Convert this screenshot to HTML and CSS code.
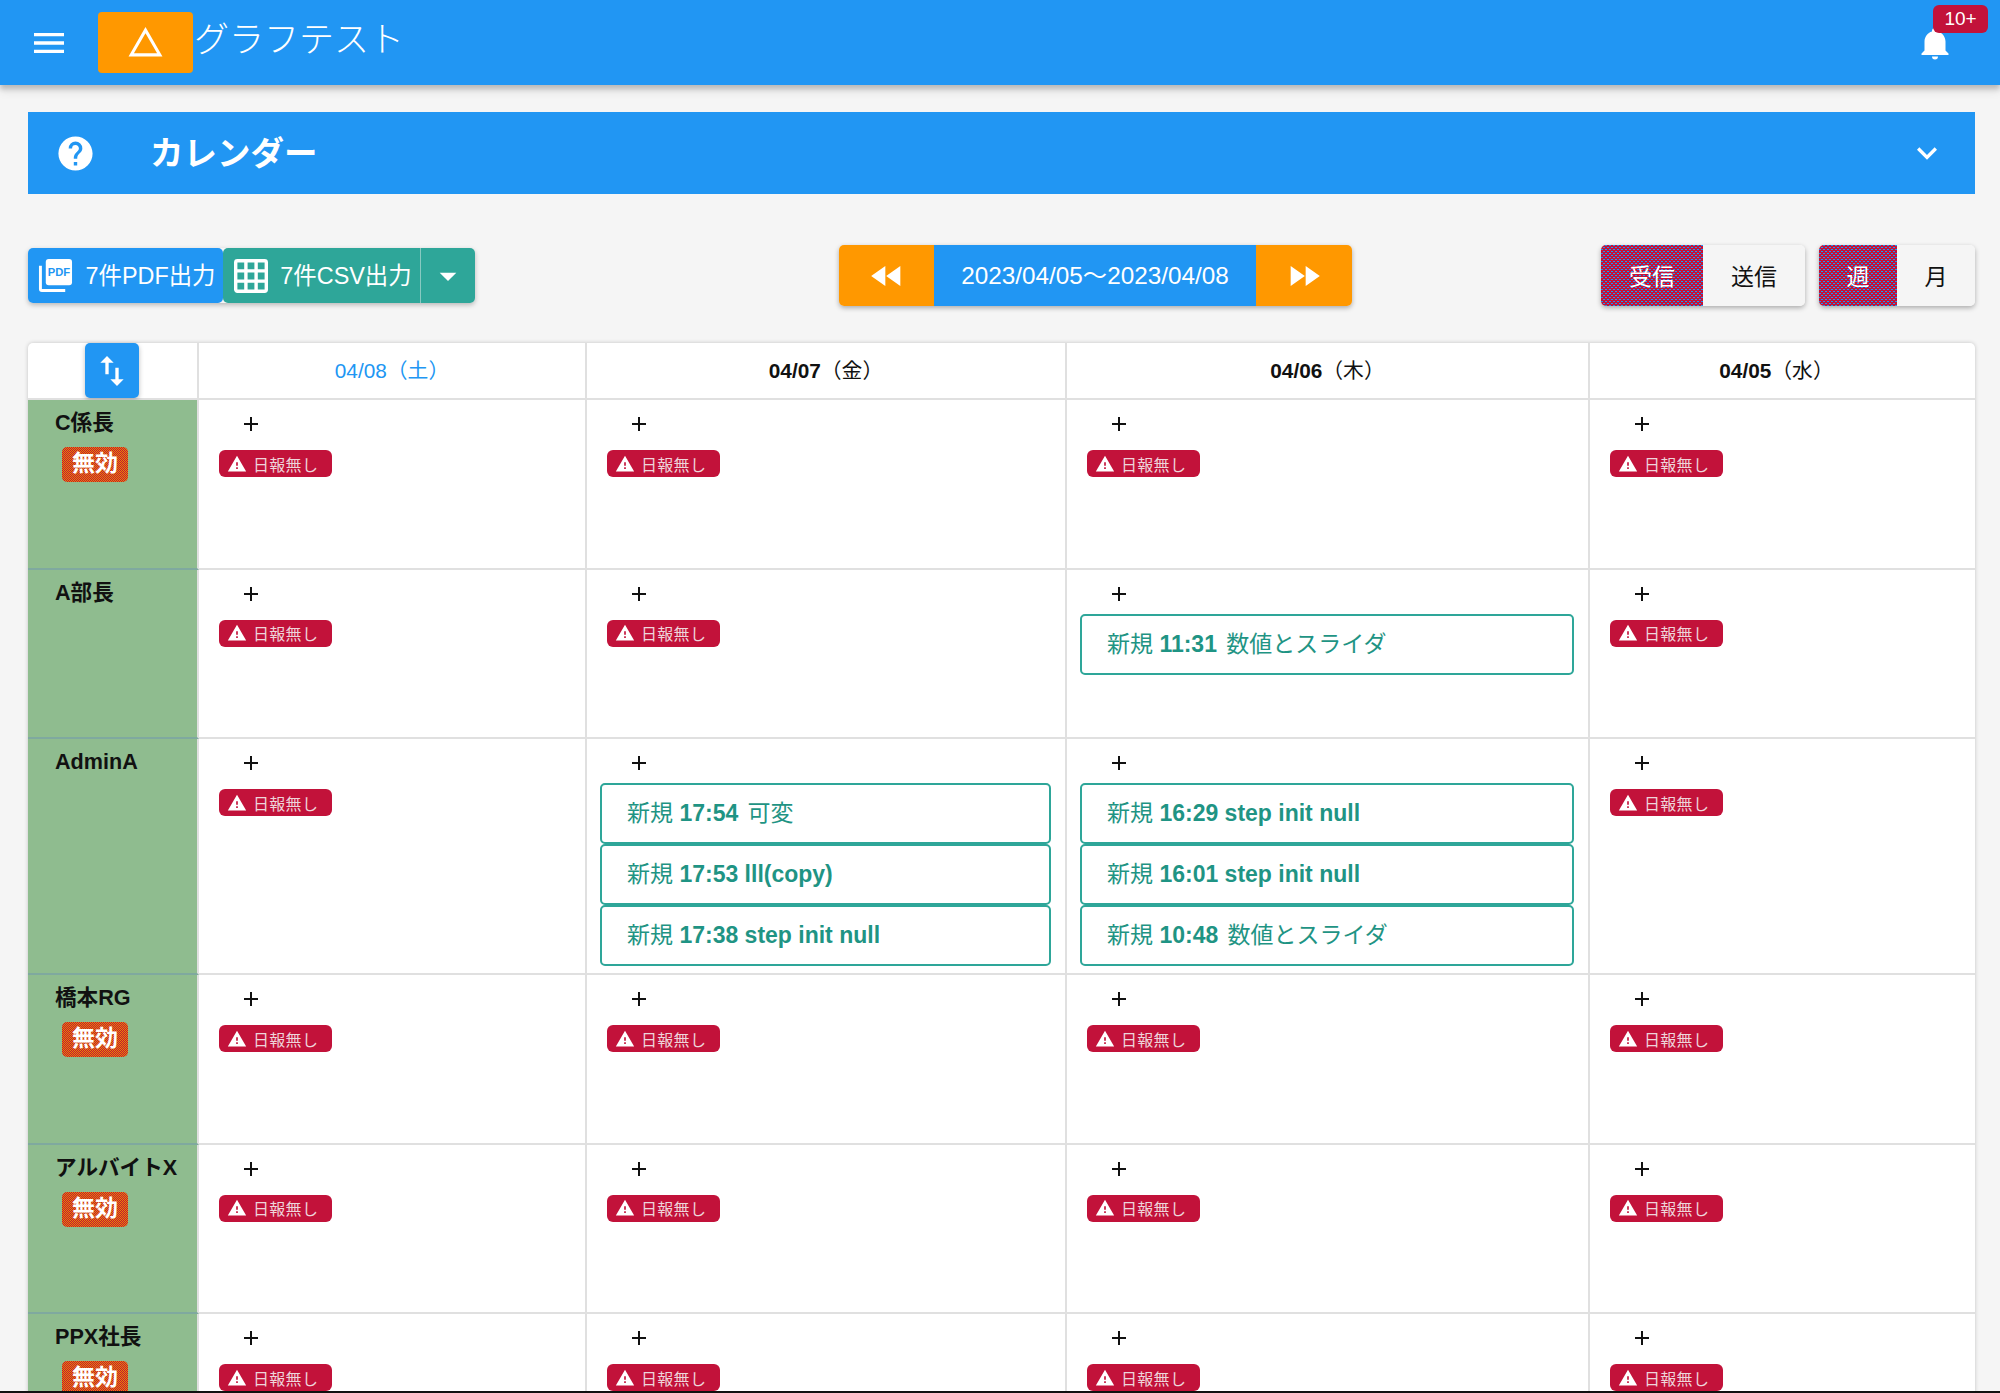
FILE: index.html
```html
<!DOCTYPE html>
<html lang="ja">

<head>
    <meta charset="UTF-8">
    <meta name="viewport" content="width=device-width, initial-scale=1.0">
    <title>グラフテスト</title>
    <link rel="stylesheet" href="styles.css">
</head>

<body>
    <svg class="sprite" aria-hidden="true">
        <symbol id="i-plus" viewBox="0 0 24 24"><path d="M19,13H13V19H11V13H5V11H11V5H13V11H19V13Z"/></symbol>
        <symbol id="i-alert" viewBox="0 0 24 24"><path d="M13,14H11V10H13M13,18H11V16H13M1,21H23L12,2L1,21Z"/></symbol>
    </svg>

    <header class="app-bar">
        <svg class="menu-icon" viewBox="0 0 24 24"><path d="M3,6H21V8H3V6M3,11H21V13H3V11M3,16H21V18H3V16Z"/></svg>
        <div class="logo">
            <svg viewBox="0 0 24 24"><path d="M12,2L1,21H23M12,6L19.53,19H4.47"/></svg>
        </div>
        <div class="app-title">グラフテスト</div>
        <div class="bell">
            <svg viewBox="0 0 24 24"><path d="M21,19V20H3V19L5,17V11C5,7.9 7.03,5.17 10,4.29C10,4.19 10,4.1 10,4A2,2 0 0,1 12,2A2,2 0 0,1 14,4C14,4.1 14,4.19 14,4.29C16.97,5.17 19,7.9 19,11V17L21,19M14,21A2,2 0 0,1 12,23A2,2 0 0,1 10,21"/></svg>
            <span class="bell-badge">10+</span>
        </div>
    </header>

    <main class="content">
        <section class="panel-head">
            <svg class="help-icon" viewBox="0 0 24 24"><path d="M15.07,11.25L14.17,12.17C13.45,12.89 13,13.5 13,15H11V14.5C11,13.39 11.45,12.39 12.17,11.67L13.41,10.41C13.78,10.05 14,9.55 14,9C14,7.89 13.1,7 12,7A2,2 0 0,0 10,9H8A4,4 0 0,1 12,5A4,4 0 0,1 16,9C16,9.88 15.64,10.67 15.07,11.25M13,19H11V17H13M12,2A10,10 0 0,0 2,12A10,10 0 0,0 12,22A10,10 0 0,0 22,12C22,6.47 17.5,2 12,2Z"/></svg>
            <h1>カレンダー</h1>
            <svg class="chevron" viewBox="0 0 24 24"><path d="M7.41,8.58L12,13.17L16.59,8.58L18,10L12,16L6,10L7.41,8.58Z"/></svg>
        </section>

        <section class="toolbar">
            <div class="export">
                <button class="btn-pdf">
                    <svg viewBox="0 0 36 36">
                        <path d="M1,8H4V32H28V35H4A3,3 0 0,1 1,32Z"/>
                        <rect x="8" y="1" width="27" height="27" rx="3"/>
                        <text x="21.5" y="19" text-anchor="middle">PDF</text>
                    </svg>
                    <span>7件PDF出力</span>
                </button>
                <button class="btn-csv">
                    <svg viewBox="2 2 20 20"><path d="M10,4V8H14V4H10M16,4V8H20V4H16M16,10V14H20V10H16M16,16V20H20V16H16M14,20V16H10V20H14M8,20V16H4V20H8M8,14V10H4V14H8M8,8V4H4V8H8M10,14H14V10H10V14M4,2H20A2,2 0 0,1 22,4V20A2,2 0 0,1 20,22H4C2.92,22 2,21.1 2,20V4A2,2 0 0,1 4,2Z"/></svg>
                    <span>7件CSV出力</span>
                </button>
                <button class="btn-csv-menu">
                    <svg viewBox="0 0 24 24"><path d="M7,10L12,15L17,10H7Z"/></svg>
                </button>
            </div>

            <div class="range">
                <button class="range-prev"><svg viewBox="0 0 24 24"><path d="M11.5,12L20,18V6M11,18V6L2.5,12L11,18Z"/></svg></button>
                <div class="range-label">2023/04/05〜2023/04/08</div>
                <button class="range-next"><svg viewBox="0 0 24 24"><path d="M13,6V18L21.5,12M4,18L12.5,12L4,6V18Z"/></svg></button>
            </div>

            <div class="toggle toggle-dir">
                <button class="active">受信</button>
                <button>送信</button>
            </div>
            <div class="toggle toggle-span">
                <button class="active">週</button>
                <button>月</button>
            </div>
        </section>

        <section class="calendar">
            <div class="cal-row cal-head">
                <div class="cell sort-cell">
                    <button class="sort-btn"><svg viewBox="0 0 24 24"><path d="M9,3L5,7H8V14H10V7H13M16,17V10H14V17H11L15,21L19,17H16Z"/></svg></button>
                </div>
                <div class="cell date sat">04/08（土）</div>
                <div class="cell date"><b>04/07</b>（金）</div>
                <div class="cell date"><b>04/06</b>（木）</div>
                <div class="cell date"><b>04/05</b>（水）</div>
            </div>

            <div class="cal-row">
                <div class="cell name">C係長<span class="invalid">無効</span></div>
                <div class="cell day"><svg class="add"><use href="#i-plus"/></svg><span class="chip"><svg><use href="#i-alert"/></svg>日報無し</span></div>
                <div class="cell day"><svg class="add"><use href="#i-plus"/></svg><span class="chip"><svg><use href="#i-alert"/></svg>日報無し</span></div>
                <div class="cell day"><svg class="add"><use href="#i-plus"/></svg><span class="chip"><svg><use href="#i-alert"/></svg>日報無し</span></div>
                <div class="cell day"><svg class="add"><use href="#i-plus"/></svg><span class="chip"><svg><use href="#i-alert"/></svg>日報無し</span></div>
            </div>

            <div class="cal-row">
                <div class="cell name">A部長</div>
                <div class="cell day"><svg class="add"><use href="#i-plus"/></svg><span class="chip"><svg><use href="#i-alert"/></svg>日報無し</span></div>
                <div class="cell day"><svg class="add"><use href="#i-plus"/></svg><span class="chip"><svg><use href="#i-alert"/></svg>日報無し</span></div>
                <div class="cell day"><svg class="add"><use href="#i-plus"/></svg><a class="event">新規 <b>11:31</b> 数値とスライダ</a></div>
                <div class="cell day"><svg class="add"><use href="#i-plus"/></svg><span class="chip"><svg><use href="#i-alert"/></svg>日報無し</span></div>
            </div>

            <div class="cal-row">
                <div class="cell name">AdminA</div>
                <div class="cell day"><svg class="add"><use href="#i-plus"/></svg><span class="chip"><svg><use href="#i-alert"/></svg>日報無し</span></div>
                <div class="cell day">
                    <svg class="add"><use href="#i-plus"/></svg>
                    <a class="event">新規 <b>17:54</b> 可変</a>
                    <a class="event">新規 <b>17:53 lll(copy)</b></a>
                    <a class="event">新規 <b>17:38 step init null</b></a>
                </div>
                <div class="cell day">
                    <svg class="add"><use href="#i-plus"/></svg>
                    <a class="event">新規 <b>16:29 step init null</b></a>
                    <a class="event">新規 <b>16:01 step init null</b></a>
                    <a class="event">新規 <b>10:48</b> 数値とスライダ</a>
                </div>
                <div class="cell day"><svg class="add"><use href="#i-plus"/></svg><span class="chip"><svg><use href="#i-alert"/></svg>日報無し</span></div>
            </div>

            <div class="cal-row">
                <div class="cell name">橋本RG<span class="invalid">無効</span></div>
                <div class="cell day"><svg class="add"><use href="#i-plus"/></svg><span class="chip"><svg><use href="#i-alert"/></svg>日報無し</span></div>
                <div class="cell day"><svg class="add"><use href="#i-plus"/></svg><span class="chip"><svg><use href="#i-alert"/></svg>日報無し</span></div>
                <div class="cell day"><svg class="add"><use href="#i-plus"/></svg><span class="chip"><svg><use href="#i-alert"/></svg>日報無し</span></div>
                <div class="cell day"><svg class="add"><use href="#i-plus"/></svg><span class="chip"><svg><use href="#i-alert"/></svg>日報無し</span></div>
            </div>

            <div class="cal-row">
                <div class="cell name">アルバイトX<span class="invalid">無効</span></div>
                <div class="cell day"><svg class="add"><use href="#i-plus"/></svg><span class="chip"><svg><use href="#i-alert"/></svg>日報無し</span></div>
                <div class="cell day"><svg class="add"><use href="#i-plus"/></svg><span class="chip"><svg><use href="#i-alert"/></svg>日報無し</span></div>
                <div class="cell day"><svg class="add"><use href="#i-plus"/></svg><span class="chip"><svg><use href="#i-alert"/></svg>日報無し</span></div>
                <div class="cell day"><svg class="add"><use href="#i-plus"/></svg><span class="chip"><svg><use href="#i-alert"/></svg>日報無し</span></div>
            </div>

            <div class="cal-row">
                <div class="cell name">PPX社長<span class="invalid">無効</span></div>
                <div class="cell day"><svg class="add"><use href="#i-plus"/></svg><span class="chip"><svg><use href="#i-alert"/></svg>日報無し</span></div>
                <div class="cell day"><svg class="add"><use href="#i-plus"/></svg><span class="chip"><svg><use href="#i-alert"/></svg>日報無し</span></div>
                <div class="cell day"><svg class="add"><use href="#i-plus"/></svg><span class="chip"><svg><use href="#i-alert"/></svg>日報無し</span></div>
                <div class="cell day"><svg class="add"><use href="#i-plus"/></svg><span class="chip"><svg><use href="#i-alert"/></svg>日報無し</span></div>
            </div>
        </section>
    </main>

    <div class="bottom-line"></div>
</body>

</html>
```

FILE: styles.css
```css
html,
body {
    margin: 0;
    height: 100%;
    overflow: hidden;
}

body {
    display: flex;
    flex-direction: column;
    background-color: #f5f5f5;
    color: #111;
    font-family: "Liberation Sans", "Noto Sans CJK JP", sans-serif;
    font-size: 21.33px;
}

svg {
    display: block;
    fill: currentColor;
}

.sprite {
    display: none;
}

button {
    display: flex;
    align-items: center;
    justify-content: center;
    margin: 0;
    padding: 0;
    border: none;
    font: inherit;
    color: #fff;
    cursor: pointer;
}

/* App bar */
.app-bar {
    flex: none;
    display: flex;
    align-items: center;
    height: 85px;
    background-color: #2196f3;
    color: #fff;
    box-shadow: 0 4px 5px rgba(0, 0, 0, 0.2), 0 8px 8px rgba(0, 0, 0, 0.06);
    z-index: 2;
}

.menu-icon {
    width: 40px;
    height: 40px;
    margin: 0 0 0 29px;
}

.logo {
    display: flex;
    align-items: center;
    justify-content: center;
    width: 95px;
    height: 61px;
    margin: 0 0 0 29px;
    border-radius: 4px;
    background-color: #ff9800;
}

.logo svg {
    width: 37px;
    height: 37px;
}

.app-title {
    margin: 0 0 12px 1px;
    font-size: 35px;
    font-weight: 300;
}

.bell {
    position: relative;
    margin: 0 47px 0 auto;
}

.bell svg {
    width: 36px;
    height: 36px;
    margin-top: 1px;
}

.bell-badge {
    position: absolute;
    top: -19px;
    left: 16px;
    width: 55px;
    height: 28px;
    border-radius: 6px;
    background-color: #c2123a;
    font-size: 19px;
    line-height: 28px;
    text-align: center;
}

/* Content */
.content {
    flex: 1;
    min-height: 0;
    overflow: hidden;
    padding: 27px 25px 0 28px;
}

.panel-head {
    display: flex;
    align-items: center;
    height: 82px;
    background-color: #2196f3;
    color: #fff;
}

.help-icon {
    width: 41px;
    height: 41px;
    margin-left: 27px;
}

.panel-head h1 {
    margin: 0 0 6px 54px;
    font-size: 33.5px;
    font-weight: bold;
}

.chevron {
    width: 40px;
    height: 40px;
    margin: 0 28px 0 auto;
}

/* Toolbar */
.toolbar {
    display: flex;
    align-items: center;
    height: 61px;
    margin-top: 51px;
    gap: 14px;
}

.export {
    display: flex;
    height: 55px;
    border-radius: 5px;
    box-shadow: 0 2px 5px rgba(0, 0, 0, 0.25);
}

.export button {
    gap: 13px;
    height: 55px;
    font-size: 23.4px;
}

.export span {
    padding-bottom: 3px;
}

.btn-pdf {
    width: 195px;
    padding-left: 2px;
    background-color: #2196f3;
    border-radius: 5px;
}

.btn-pdf svg {
    width: 35px;
    height: 35px;
    fill: #fff;
}

.btn-pdf text {
    fill: #2196f3;
    font-size: 11.5px;
    font-weight: bold;
}

.export .btn-csv {
    gap: 12px;
    width: 197px;
    padding-left: 3px;
    background-color: #2ea699;
    border-radius: 5px 0 0 5px;
}

.btn-csv svg {
    width: 34px;
    height: 34px;
}

.btn-csv-menu {
    width: 55px;
    background-color: #2ea699;
    border-left: 1px solid #88c9c1;
    border-radius: 0 5px 5px 0;
}

.btn-csv-menu svg {
    width: 40px;
    height: 40px;
}

.range {
    display: flex;
    height: 61px;
    margin-left: 350px;
    border-radius: 5px;
    overflow: hidden;
    box-shadow: 0 2px 5px rgba(0, 0, 0, 0.3);
}

.range button {
    background-color: #ff9800;
}

.range svg {
    width: 40px;
    height: 40px;
}

.range-prev {
    width: 95px;
}

.range-next {
    width: 96px;
}

.range-label {
    width: 322px;
    background-color: #2196f3;
    color: #fff;
    font-size: 24.3px;
    line-height: 61px;
    text-align: center;
}

.toggle {
    display: flex;
    height: 61px;
    border-radius: 5px;
    overflow: hidden;
    box-shadow: 0 2px 5px rgba(0, 0, 0, 0.3);
}

.toggle-dir {
    margin-left: auto;
}

.toggle button {
    padding-bottom: 2px;
    background-color: #f5f5f5;
    color: #111;
    font-size: 23px;
}

.toggle-dir button {
    width: 102px;
}

.toggle-span button {
    width: 78px;
}

/* dotted fill of the selected toggle */
.toggle button.active {
    background-color: #c2123a;
    background-image:
        conic-gradient(at 2px 1px, transparent 75%, #2196f3 0),
        conic-gradient(at 2px 1px, transparent 75%, #2196f3 0);
    background-size: 4px 4px;
    background-position: 0 0, 2px 2px;
    color: #fff;
}

/* Calendar */
.calendar {
    margin-top: 37px;
    border-radius: 5px 5px 0 0;
    background-color: #fff;
    box-shadow: 0 0 4px rgba(0, 0, 0, 0.2);
}

.cal-row {
    display: grid;
    grid-template-columns: 171px 388px 480px 523px 1fr;
    min-height: 169.5px;
}

.cal-head {
    min-height: 56px;
}

.cell {
    box-sizing: border-box;
    border-right: 2px solid #e0e0e0;
    border-bottom: 2px solid #e0e0e0;
}

.cell:last-child {
    border-right: none;
}

.sort-cell {
    padding-left: 57px;
}

.sort-btn {
    width: 54px;
    height: 55px;
    border-radius: 5px;
    background-color: #2196f3;
    box-shadow: 0 2px 5px rgba(0, 0, 0, 0.25);
}

.sort-btn svg {
    width: 40px;
    height: 40px;
}

.date {
    padding-top: 1px;
    font-size: 20.8px;
    line-height: 53px;
    text-align: center;
}

.date:last-child {
    padding-right: 12px;
}

.sat {
    color: #2196f3;
}

.name {
    padding: 9px 0 0 27px;
    background-color: #8fbc8f;
    border-bottom-color: #7fa99f;
    font-size: 21.6px;
    font-weight: bold;
    line-height: 28px;
}

.invalid {
    display: block;
    box-sizing: border-box;
    width: 66px;
    height: 35px;
    margin: 10px 0 0 7px;
    border-radius: 5px;
    background-color: #c2123a;
    background-image:
        conic-gradient(at 1px 1px, transparent 75%, #e88a00 0),
        conic-gradient(at 1px 1px, transparent 75%, #e88a00 0);
    background-size: 2px 2px;
    background-position: 0 0, 1px 1px;
    color: #fff;
    font-size: 23px;
    line-height: 33px;
    text-align: center;
}

.day {
    padding: 12px 14px 7px 13px;
}

.add {
    width: 24px;
    height: 24px;
    margin-left: 27px;
}

.chip {
    display: flex;
    align-items: center;
    gap: 6px;
    width: 113px;
    height: 27px;
    margin: 14px 0 0 7px;
    border-radius: 6px;
    background-color: #c2123a;
    color: #eed5da;
    font-size: 16px;
    letter-spacing: 0.3px;
}

.chip svg {
    width: 20px;
    height: 20px;
    margin-left: 8px;
    fill: #fff;
}

.event {
    display: block;
    box-sizing: border-box;
    height: 61px;
    padding-left: 25px;
    border: 2px solid #2ea699;
    border-radius: 5px;
    background-color: #fff;
    color: #1f9484;
    font-size: 23px;
    line-height: 57px;
}

.event b {
    margin-right: 3px;
}

.add + .event {
    margin-top: 8px;
}

.bottom-line {
    flex: none;
    height: 2px;
    background-color: #111;
    z-index: 3;
}
```
